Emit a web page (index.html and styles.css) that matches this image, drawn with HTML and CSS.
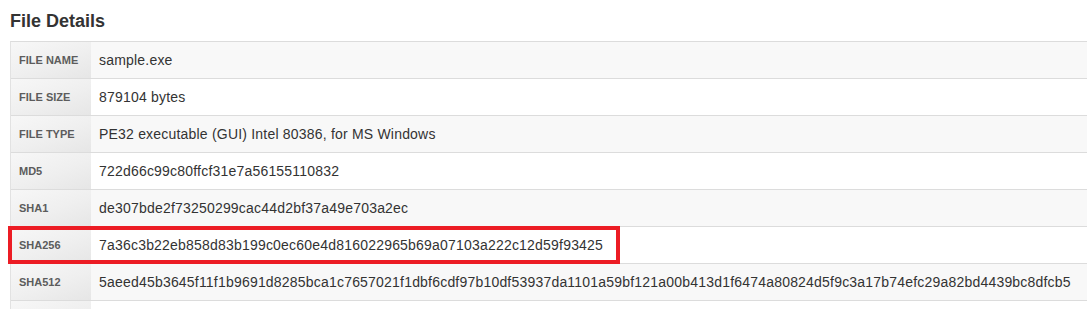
FILE: index.html
```html
<!DOCTYPE html>
<html>
<head>
<meta charset="utf-8">
<link rel="stylesheet" href="styles.css">
</head>
<body>
<div class="panel">
  <h2 class="title">File Details</h2>
  <div class="details">
    <div class="row striped"><div class="label">File name</div><div class="value">sample.exe</div></div>
    <div class="row"><div class="label">File size</div><div class="value">879104 bytes</div></div>
    <div class="row striped"><div class="label">File type</div><div class="value">PE32 executable (GUI) Intel 80386, for MS Windows</div></div>
    <div class="row"><div class="label">MD5</div><div class="value">722d66c99c80ffcf31e7a56155110832</div></div>
    <div class="row striped"><div class="label">SHA1</div><div class="value">de307bde2f73250299cac44d2bf37a49e703a2ec</div></div>
    <div class="row highlight"><div class="label">SHA256</div><div class="value">7a36c3b22eb858d83b199c0ec60e4d816022965b69a07103a222c12d59f93425</div></div>
    <div class="row striped"><div class="label">SHA512</div><div class="value">5aeed45b3645f11f1b9691d8285bca1c7657021f1dbf6cdf97b10df53937da1101a59bf121a00b413d1f6474a80824d5f9c3a17b74efc29a82bd4439bc8dfcb5</div></div>
    <div class="row"><div class="label"></div><div class="value"></div></div>
  </div>
</div>
</body>
</html>
```
FILE: styles.css
```css
html, body {
  margin: 0;
  padding: 0;
  background: #fff;
}
body {
  font-family: "Liberation Sans", Arial, sans-serif;
  color: #333;
  overflow: hidden;
}
.panel {
  padding-left: 10px;
}
.title {
  margin: 11px 0 10px;
  font-size: 18px;
  line-height: 20px;
  font-weight: bold;
  color: #333;
}
.details {
  border-top: 1px solid #dcdcdc;
  border-left: 1px solid #e2e2e2;
}
.row {
  display: grid;
  grid-template-columns: 80px 1fr;
  height: 36px;
  border-bottom: 1px solid #dcdcdc;
  background: #fff;
}
.row.striped {
  background: #f8f8f8;
}
.label {
  display: flex;
  align-items: center;
  padding-left: 8px;
  font-size: 11px;
  font-weight: bold;
  text-transform: uppercase;
  color: #5c5c5c;
  background: linear-gradient(160deg, #f7f7f7 0%, #efefef 55%, #e6e6e6 100%);
}
.value {
  display: flex;
  align-items: center;
  padding-left: 8px;
  font-size: 14px;
  line-height: 20px;
  letter-spacing: 0.2px;
  color: #333;
  white-space: nowrap;
}
.highlight {
  position: relative;
}
.highlight::after {
  content: "";
  position: absolute;
  top: -1px;
  left: -3px;
  width: 612px;
  height: 38px;
  box-sizing: border-box;
  border: 4px solid #ec1c24;
  pointer-events: none;
}
```
